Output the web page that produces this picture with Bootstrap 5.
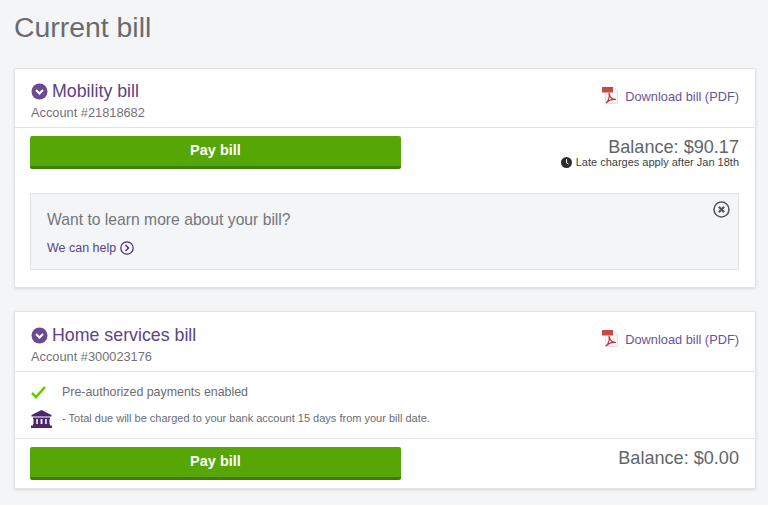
<!DOCTYPE html>
<html lang="en">
<head>
  <meta charset="UTF-8" />
  <meta name="viewport" content="width=device-width, initial-scale=1.0" />
  <title>Current bill</title>
  <link href="https://cdn.jsdelivr.net/npm/bootstrap@5.3.0/dist/css/bootstrap.min.css" rel="stylesheet" />
  <style>
    body { background-color: #f4f5f7; font-family: "Liberation Sans", Arial, sans-serif; color: #6a6d72; overflow: hidden; }
    .page-wrap { padding: 0 12px 0 14px; }
    .page-title { font-size: 28.4px; line-height: 34px; font-weight: 400; color: #686b70; margin: 0; padding: 10px 0 24px; }
    .bill-panel { background: #fff; border: 1px solid #e3e4e6; border-radius: 2px; box-shadow: 0 1px 3px rgba(0,0,0,.12); margin-bottom: 23px; }
    .bill-head { padding: 10px 16px 5px 15px; border-bottom: 1px solid #e3e4e6; height: 59px; }
    .bill-head.tall-head { height: 60px; padding-top: 11px; }
    .tall-head .dl-link { margin-top: 7px; }
    .bill-title { font-size: 17.8px; line-height: 24px; color: #5b4384; margin: 0; gap: 5px; }
    .bill-title svg { margin-left: 1px; margin-right: -1px; }
    .acct { font-size: 12.8px; line-height: 18px; margin-top: 1px; padding-left: 1px; color: #6f7277; }
    .dl-link { font-size: 12.8px; color: #6a5590; text-decoration: none; margin-top: 8px; gap: 7px; }
    .pay-btn { width: 371px; height: 33px; background: #56a605; border: 0; border-bottom: 3px solid #3f7d00; border-radius: 2px; color: #fff; font-size: 14.5px; font-weight: 700; line-height: 25px; padding: 0 0 2px; }
    .pay-btn:hover { background: #56a605; color: #fff; border-bottom-color: #3f7d00; }
    .bal { font-size: 18.1px; line-height: 20px; text-align: right; color: #62656a; padding-top: 1px; }
    .late { font-size: 11px; line-height: 13px; margin-top: -1px; text-align: right; color: #3d3f42; }
    .pay-row { padding: 8px 16px 0 15px; }
    .help-box { position: relative; margin: 24px 16px 17px 15px; height: 77px; background: #f4f5f7; border: 1px solid #e3e4e6; padding: 15px 16px; }
    .help-q { font-size: 15.7px; line-height: 21px; color: #73767b; }
    .help-link { font-size: 12.5px; color: #5b4384; text-decoration: none; display: inline-block; margin-top: 9px; }
    .close-ic { position: absolute; top: 7px; right: 8px; }
    .pap-rows { padding: 11px 16px 11px 15px; border-bottom: 1px solid #e3e4e6; height: 67px; }
    .pap-ic { width: 32px; padding-left: 1px; }
    .pap-big { font-size: 12.4px; }
    .pap-small { font-size: 11px; }
  </style>
</head>
<body>
  <div class="page-wrap">
    <h1 class="page-title">Current bill</h1>

    <div class="bill-panel">
      <div class="bill-head d-flex justify-content-between">
        <div>
          <h2 class="bill-title d-flex align-items-center">
            <svg width="17" height="17" viewBox="0 0 17 17"><circle cx="8.5" cy="8.5" r="8" fill="#6b4a8f"/><path d="M5 7l3.500 3.500L12 7" fill="none" stroke="#fff" stroke-width="2"/></svg>
            Mobility bill
          </h2>
          <div class="acct">Account #21818682</div>
        </div>
        <a href="#" class="dl-link d-flex align-items-start">
          <svg width="16" height="17" viewBox="0 0 16 17"><path d="M3.500 1h9l3 3v12.500h-12z" fill="#f7f7f7" stroke="#e2e2e2"/><rect x="0" y="0" width="11" height="5.500" fill="#c8474a"/><path d="M7 6c1 5 3 6 7 6.500-4-.5-7 .5-10 3.500 3-3 4-6 3-10z" fill="none" stroke="#b83234" stroke-width="1.200"/></svg>
          Download bill (PDF)
        </a>
      </div>
      <div class="pay-row d-flex justify-content-between align-items-start">
        <button class="btn pay-btn">Pay bill</button>
        <div>
          <div class="bal">Balance: $90.17</div>
          <div class="late d-flex align-items-center justify-content-end gap-1">
            <svg width="11" height="11" viewBox="0 0 11 11"><circle cx="5.500" cy="5.500" r="5.500" fill="#2c2e30"/><path d="M5.500 2v3.700l2 1.300" fill="none" stroke="#fff"/></svg>
            Late charges apply after Jan 18th
          </div>
        </div>
      </div>
      <div class="help-box">
        <div class="help-q">Want to learn more about your bill?</div>
        <a href="#" class="help-link d-inline-flex align-items-center gap-1">We can help
          <svg width="14" height="14" viewBox="0 0 14 14"><circle cx="7" cy="7" r="6.200" fill="none" stroke="#4b286d" stroke-width="1.200"/><path d="M5.500 4l3 3-3 3" fill="none" stroke="#4b286d" stroke-width="1.400"/></svg>
        </a>
        <svg class="close-ic" width="17" height="17" viewBox="0 0 17 17"><circle cx="8.500" cy="8.500" r="7.500" fill="none" stroke="#54595f" stroke-width="1.600"/><path d="M5.800 5.800l5.400 5.400M11.200 5.800l-5.400 5.400" stroke="#54595f" stroke-width="2.200"/></svg>
      </div>
    </div>

    <div class="bill-panel">
      <div class="bill-head tall-head d-flex justify-content-between">
        <div>
          <h2 class="bill-title d-flex align-items-center">
            <svg width="17" height="17" viewBox="0 0 17 17"><circle cx="8.5" cy="8.5" r="8" fill="#6b4a8f"/><path d="M5 7l3.500 3.500L12 7" fill="none" stroke="#fff" stroke-width="2"/></svg>
            Home services bill
          </h2>
          <div class="acct">Account #300023176</div>
        </div>
        <a href="#" class="dl-link d-flex align-items-start">
          <svg width="16" height="17" viewBox="0 0 16 17"><path d="M3.500 1h9l3 3v12.500h-12z" fill="#f7f7f7" stroke="#e2e2e2"/><rect x="0" y="0" width="11" height="5.500" fill="#c8474a"/><path d="M7 6c1 5 3 6 7 6.500-4-.5-7 .5-10 3.500 3-3 4-6 3-10z" fill="none" stroke="#b83234" stroke-width="1.200"/></svg>
          Download bill (PDF)
        </a>
      </div>
      <div class="pap-rows d-flex flex-column gap-2">
        <div class="d-flex align-items-center pap-big">
          <span class="pap-ic"><svg width="15" height="13" viewBox="0 0 15 13"><path d="M1 7l4 4 9-10" fill="none" stroke="#66cc00" stroke-width="2.600"/></svg></span>
          Pre-authorized payments enabled
        </div>
        <div class="d-flex align-items-center pap-small">
          <span class="pap-ic"><svg width="21" height="18" viewBox="0 0 21 18"><path d="M10.500 0L20.500 5v1.500H.5V5z" fill="#4b286d"/><path d="M2 7.500h17V9H2zM2.500 9h2.800v5H2.500zM6.800 9h2.800v5H6.800zM11.400 9h2.800v5H11.400zM15.700 9h2.800v5H15.700zM2 14h17v1.500H2zM0 15.500h21V18H0z" fill="#4b286d"/></svg></span>
          - Total due will be charged to your bank account 15 days from your bill date.
        </div>
      </div>
      <div class="pay-row d-flex justify-content-between align-items-start pb-2">
        <button class="btn pay-btn">Pay bill</button>
        <div class="bal">Balance: $0.00</div>
      </div>
    </div>
  </div>
  <script src="https://cdn.jsdelivr.net/npm/bootstrap@5.3.0/dist/js/bootstrap.bundle.min.js"></script>
</body>
</html>
